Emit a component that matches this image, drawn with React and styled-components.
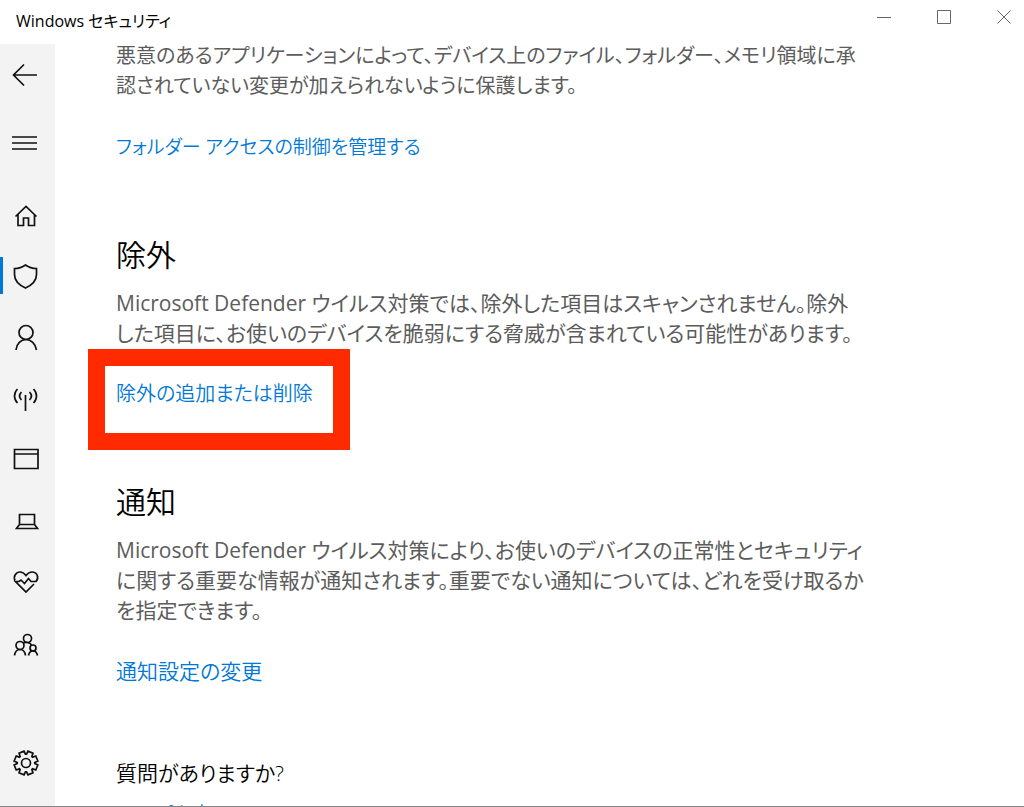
import React from 'react';
import styled, { createGlobalStyle } from 'styled-components';

const GlobalStyle = createGlobalStyle`
    *, *::before, *::after {
        box-sizing: border-box;
    }
    body {
        margin: 0;
        background-color: white;
        color: black;
        font-family: "Open Sans", "Noto Sans CJK JP", sans-serif;
        font-feature-settings: "palt";
        overflow: hidden;
    }
`

const WindowDiv = styled.div`
    display: flex;
    flex-direction: column;
    height: 100vh;
    border-bottom: 1px solid #858585;
    overflow: hidden;
`

const TitleBar = styled.header`
    display: flex;
    flex: none;
    justify-content: space-between;
    height: 44px;
    padding-left: 16px;
`

const WindowTitle = styled.span`
    font-size: 16px;
    line-height: 42px;
`

const WindowButtons = styled.div`
    display: flex;
`

const WindowButton = styled.button`
    display: flex;
    align-items: center;
    justify-content: center;
    width: 60px;
    height: 34px;
    padding: 0;
    border: none;
    background: none;

    &:last-child {
        margin-right: -10px;
    }
`

const BodyDiv = styled.div`
    display: flex;
    flex: 1;
    min-height: 0;
`

const SideNav = styled.nav`
    display: flex;
    flex: none;
    flex-direction: column;
    width: 55px;
    background-color: #f3f3f3;
`

const NavButton = styled.button`
    display: flex;
    flex: none;
    align-items: center;
    width: 100%;
    height: ${props => props.$tall ? '70px' : '61px'};
    padding: 0 0 0 10px;
    border: none;
    background: none;
    margin-top: ${props => props.$bottom ? 'auto' : '0'};
    margin-bottom: ${props => props.$bottom ? '13px' : '0'};
`

const ActiveButton = styled(NavButton)`
    padding-left: 0;

    &::before {
        content: "";
        width: 3px;
        height: 37px;
        margin-right: 7px;
        background-color: #0078d7;
    }
`

const Icon = styled.svg`
    flex: none;
    fill: none;
    stroke: ${props => props.$gray ? '#666' : '#111'};
    stroke-width: ${props => props.$gray ? 1 : 1.7};
`

const Content = styled.main`
    flex: 1;
    min-width: 0;
    margin-top: -3px;
    padding-left: 61px;
    overflow: hidden;
    clip-path: inset(3px 0 0 0);
    white-space: nowrap;
`

const Section = styled.section`
    margin-bottom: 72px;
`

const Heading = styled.h2`
    margin: 0 0 12px;
    font-size: 30px;
    font-weight: 350;
    line-height: 42px;
`

const SmallHeading = styled.h3`
    margin: 0 0 12px;
    font-size: 21px;
    font-weight: 350;
    line-height: 30px;
`

const Description = styled.p`
    margin: 0 0 31px;
    color: #5c5c5c;
    font-size: ${props => props.$small ? '20px' : '21px'};
    font-weight: 400;
    line-height: 30px;
`

const TextLink = styled.a`
    position: relative;
    display: inline-block;
    color: #0078d7;
    font-size: ${props => props.$size || '20px'};
    font-weight: 350;
    line-height: 30px;
    text-decoration: none;
    vertical-align: top;
`

const MarkedLink = styled(TextLink)`
    &::after {
        content: "";
        position: absolute;
        top: -30px;
        left: -28px;
        width: 262px;
        height: 101px;
        border: 17px solid #ff2a00;
    }
`

const NavIcon = ({ children }) => (
    <Icon width="32" height="32" viewBox="0 0 32 32" aria-hidden="true">{children}</Icon>
)

const gearPath = () => {
    const points = []
    for (let i = 0; i < 8; i++) {
        [[-19, 8.8], [-13, 12], [13, 12], [19, 8.8]].forEach(([offset, r]) => {
            const a = (i * 45 + 22.5 + offset) * Math.PI / 180
            points.push(`${(16 + r * Math.cos(a)).toFixed(2)} ${(16 + r * Math.sin(a)).toFixed(2)}`)
        })
    }
    return `M${points.join('L')}Z`
}

const App = () => {
    return <WindowDiv>
        <GlobalStyle />
        <TitleBar>
            <WindowTitle>Windows セキュリティ</WindowTitle>
            <WindowButtons>
                <WindowButton aria-label="最小化">
                    <Icon $gray width="14" height="14"><path d="M0 7.5H14" /></Icon>
                </WindowButton>
                <WindowButton aria-label="最大化">
                    <Icon $gray width="14" height="14"><path d="M.5 .5H13.5V13.5H.5Z" /></Icon>
                </WindowButton>
                <WindowButton aria-label="閉じる">
                    <Icon $gray width="14" height="14"><path d="M.5 .5L13.5 13.5M13.5 .5L.5 13.5" /></Icon>
                </WindowButton>
            </WindowButtons>
        </TitleBar>
        <BodyDiv>
            <SideNav>
                <NavButton $tall aria-label="戻る">
                    <NavIcon><path d="M27 12H3.5M14 1.5L3.5 12L14 22.5" /></NavIcon>
                </NavButton>
                <NavButton $tall aria-label="メニュー">
                    <NavIcon><path d="M2 4H27M2 10H27M2 16H27" /></NavIcon>
                </NavButton>
                <NavButton aria-label="ホーム">
                    <NavIcon><path d="M5.5 17.5L16 7.5L26.5 17.5M8 15.5V26.5H13.5V19H18.5V26.5H24.5V15.5" /></NavIcon>
                </NavButton>
                <ActiveButton aria-label="ウイルスと脅威の防止">
                    <NavIcon><path d="M4.5 8.5C9 8.5 12 7.5 15.5 5C19 7.5 22 8.5 26.5 8.5V14.5C26.5 21 21 25.500 15.5 28C10 25.5 4.5 21 4.5 14.5Z" /></NavIcon>
                </ActiveButton>
                <NavButton aria-label="アカウントの保護">
                    <NavIcon><circle cx="16" cy="11.5" r="7" /><path d="M6 29C6.5 22.500 11 18.5 16 18.5C21 18.5 25.5 22.500 26.5 29" /></NavIcon>
                </NavButton>
                <NavButton aria-label="ファイアウォールとネットワーク保護">
                    <NavIcon><path d="M15.5 13V29M7.5 7C3.500 11 3.500 17 7.5 21M23.5 7C27.5 11 27.5 17 23.5 21M11.5 10C9 12.5 9 15.5 11.5 18M19.5 10C22 12.5 22 15.5 19.5 18" /></NavIcon>
                </NavButton>
                <NavButton aria-label="アプリとブラウザーの制御">
                    <NavIcon><path d="M4.5 6.5H28V25.5H4.5ZM4.5 11H28" /></NavIcon>
                </NavButton>
                <NavButton aria-label="デバイス セキュリティ">
                    <NavIcon><path d="M9.5 10.5H24.5V20.5H9.5ZM9.5 20.5L6.5 24.500H27.5L24.5 20.5" /></NavIcon>
                </NavButton>
                <NavButton aria-label="デバイスのパフォーマンスと正常性">
                    <NavIcon><path d="M5 15.5C3 11.5 6 7 10 7C13 7 14.5 8.5 16 10.5C17.5 8.5 19 7 22 7C27 7 29.5 12.5 26 16.5H21L18.5 13.5L14.5 18.5L11 15L9 16.5H5.5L16 27L24 19" /></NavIcon>
                </NavButton>
                <NavButton aria-label="ファミリーのオプション">
                    <NavIcon><circle cx="17.5" cy="12.5" r="4" /><circle cx="10" cy="19.5" r="4" /><circle cx="23" cy="22" r="3" /><path d="M4.5 29.5C5 26 7 23.5 10 23.5C13 23.5 15 26 15.5 29.5M13 17C15 16 20 16 21.5 19M18.5 29.5C19 26.5 20.5 25 23 25C25.5 25 27 26.5 27.5 29.5" /></NavIcon>
                </NavButton>
                <NavButton $bottom aria-label="設定">
                    <NavIcon><path d={gearPath()} /><circle cx="16" cy="16" r="4.5" /></NavIcon>
                </NavButton>
            </SideNav>
            <Content>
                <Section>
                    <Description $small>
                        悪意のあるアプリケーションによって、デバイス上のファイル、フォルダー、メモリ領域に承<br />
                        認されていない変更が加えられないように保護します。
                    </Description>
                    <TextLink href="#folder" $size="19px">フォルダー アクセスの制御を管理する</TextLink>
                </Section>
                <Section>
                    <Heading>除外</Heading>
                    <Description>
                        Microsoft Defender ウイルス対策では、除外した項目はスキャンされません。除外<br />
                        した項目に、お使いのデバイスを脆弱にする脅威が含まれている可能性があります。
                    </Description>
                    <MarkedLink href="#exclusions">除外の追加または削除</MarkedLink>
                </Section>
                <Section>
                    <Heading>通知</Heading>
                    <Description>
                        Microsoft Defender ウイルス対策により、お使いのデバイスの正常性とセキュリティ<br />
                        に関する重要な情報が通知されます。重要でない通知については、どれを受け取るか<br />
                        を指定できます。
                    </Description>
                    <TextLink href="#notifications" $size="21px">通知設定の変更</TextLink>
                </Section>
                <section>
                    <SmallHeading>質問がありますか?</SmallHeading>
                    <TextLink href="#help">ヘルプを表示</TextLink>
                </section>
            </Content>
        </BodyDiv>
    </WindowDiv>
}

export default App;
